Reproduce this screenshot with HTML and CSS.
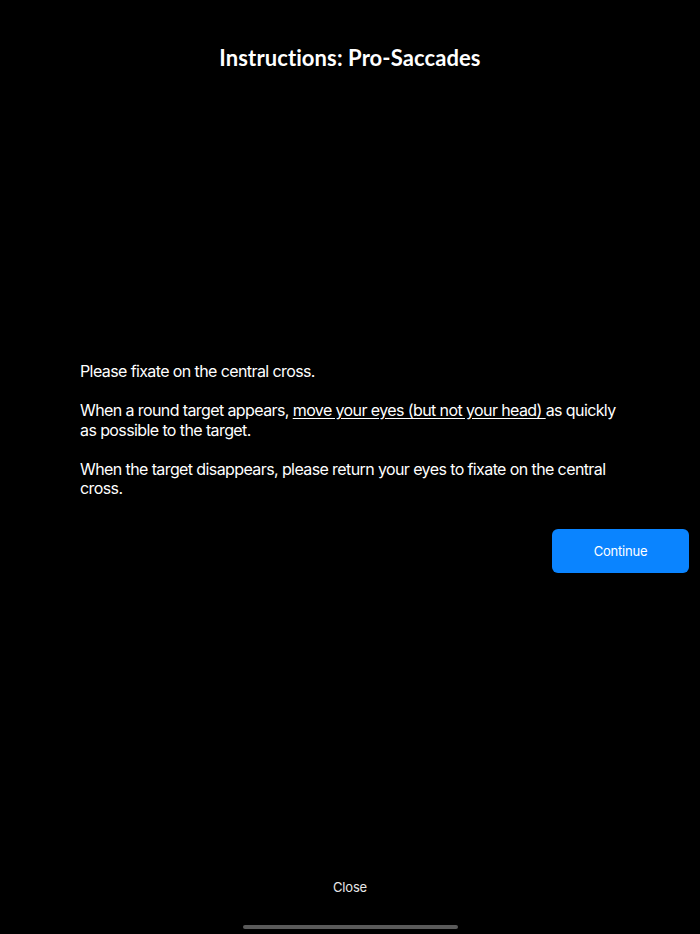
FILE: index.html
```html
<!DOCTYPE html>
<html>
<head>
<meta charset="utf-8">
<link rel="stylesheet" href="styles.css">
</head>
<body>
<div class="screen">
  <h1 class="title">Instructions: Pro-Saccades</h1>
  <div class="content">
    <div class="text">
      <p>Please fixate on the central cross.</p>
      <p>When a round target appears, <span class="u">move your eyes (but not your head) </span>as quickly as possible to the target.</p>
      <p>When the target disappears, please return your eyes to fixate on the central cross.</p>
    </div>
    <div class="actions">
      <button class="continue">Continue</button>
    </div>
  </div>
  <div class="footer">
    <span class="close">Close</span>
    <div class="home"></div>
  </div>
</div>
</body>
</html>
```

FILE: styles.css
```css
html, body {
  margin: 0;
  padding: 0;
  background: #000;
}
.screen {
  width: 700px;
  height: 934px;
  display: flex;
  flex-direction: column;
  color: #fff;
  font-family: Inter, "Noto Sans", sans-serif;
}
.title {
  margin: 0;
  padding-top: 45px;
  text-align: center;
  font-family: Lato, sans-serif;
  font-weight: 700;
  font-size: 22px;
  line-height: 26px;
  letter-spacing: 0.1px;
}
.content {
  flex: 1;
  display: flex;
  flex-direction: column;
  padding-top: 291px;
}
.text {
  padding-left: 80px;
  width: 545px;
  font-size: 16px;
  line-height: 19.5px;
  letter-spacing: -0.6px;
}
.text p {
  margin: 0 0 19.5px 0;
}
.u {
  text-decoration: underline;
  text-underline-offset: 2px;
}
.actions {
  display: flex;
  justify-content: flex-end;
  padding-right: 11px;
  margin-top: 11px;
}
.continue {
  width: 137px;
  height: 44px;
  border: none;
  border-radius: 6px;
  background: #0a84ff;
  color: #fff;
  font-family: Inter, sans-serif;
  font-size: 13px;
  letter-spacing: -0.2px;
  cursor: pointer;
}
.footer {
  display: flex;
  flex-direction: column;
  align-items: center;
  padding-bottom: 5px;
}
.close {
  font-size: 13px;
  color: #e8e8e8;
  line-height: 16px;
  letter-spacing: -0.2px;
}
.home {
  margin-top: 30px;
  width: 215px;
  height: 4px;
  border-radius: 2px;
  background: #5a5a5a;
}
```
